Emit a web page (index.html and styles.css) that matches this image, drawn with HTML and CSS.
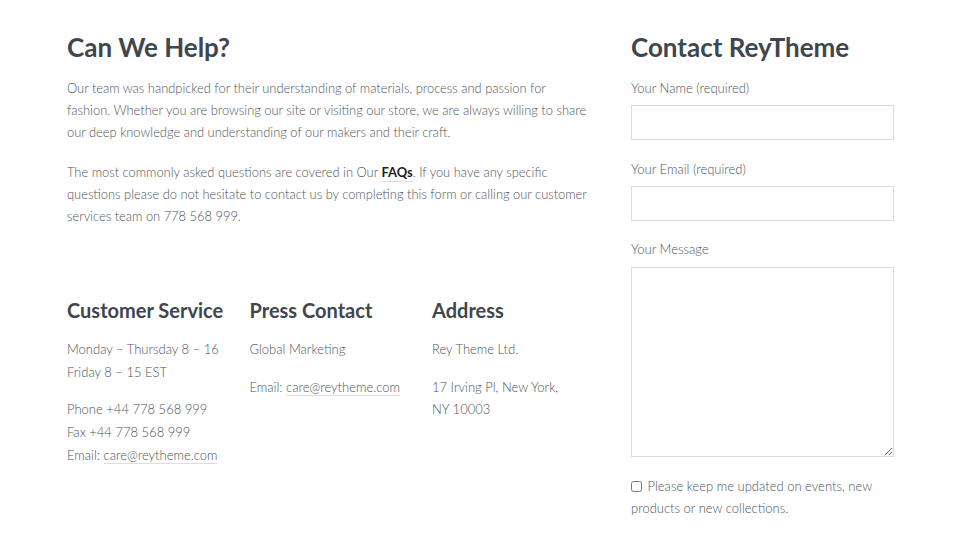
FILE: index.html
```html
<!DOCTYPE html>
<html lang="en">
<head>
<meta charset="utf-8">
<title>Contact</title>
<link rel="stylesheet" href="styles.css">
</head>
<body>
<div class="page">
  <main class="main">
    <h1 class="title">Can We Help?</h1>
    <p class="text">Our team was handpicked for their understanding of materials, process and passion for fashion. Whether you are browsing our site or visiting our store, we are always willing to share our deep knowledge and understanding of our makers and their craft.</p>
    <p class="text">The most commonly asked questions are covered in Our <a class="strong-link" href="#">FAQs</a>. If you have any specific questions please do not hesitate to contact us by completing this form or calling our customer services team on 778 568 999.</p>
    <div class="cols">
      <section class="col">
        <h2 class="sub">Customer Service</h2>
        <p class="small">Monday – Thursday 8 – 16<br>Friday 8 – 15 EST</p>
        <p class="small">Phone +44 778 568 999<br>Fax +44 778 568 999<br>Email: <a class="link" href="#">care@reytheme.com</a></p>
      </section>
      <section class="col">
        <h2 class="sub">Press Contact</h2>
        <p class="small">Global Marketing</p>
        <p class="small">Email: <a class="link" href="#">care@reytheme.com</a></p>
      </section>
      <section class="col">
        <h2 class="sub">Address</h2>
        <p class="small">Rey Theme Ltd.</p>
        <p class="small">17 Irving Pl, New York,<br>NY 10003</p>
      </section>
    </div>
  </main>
  <aside class="side">
    <h1 class="title">Contact ReyTheme</h1>
    <form class="form">
      <label class="label">Your Name (required)</label>
      <input class="field" type="text">
      <label class="label">Your Email (required)</label>
      <input class="field" type="email">
      <label class="label">Your Message</label>
      <textarea class="area"></textarea>
      <label class="check"><input class="box" type="checkbox"> Please keep me updated on events, new products or new collections.</label>
    </form>
  </aside>
</div>
</body>
</html>
```
FILE: styles.css
```css
* { box-sizing: border-box; }
html, body { margin: 0; padding: 0; background: #fff; }
body {
  font-family: Lato, "Open Sans", sans-serif;
  font-weight: 300;
  color: #4e545b;
  font-size: 13px;
}
.page {
  display: flex;
  padding: 31px 0 0 67px;
}
.main { width: 540px; flex-shrink: 0; }
.side { width: 263px; margin-left: 24px; flex-shrink: 0; }
.title {
  margin: 0;
  font-size: 26px;
  font-weight: 700;
  line-height: 32px;
  color: #40464e;
}
.text {
  margin: 14px 0 0;
  line-height: 22px;
  font-size: 12.88px;
  width: 523px;
}
.text + .text { margin-top: 18px; }
.strong-link {
  color: #1a1d21;
  font-weight: 700;
  line-height: 1;
  text-decoration: underline;
  text-decoration-color: #ddd;
  text-decoration-thickness: 1px;
  text-underline-offset: 4px;
}
.cols {
  display: flex;
  margin-top: 70px;
}
.col { width: 182.5px; flex-shrink: 0; }
.sub {
  margin: 0;
  font-size: 20px;
  font-weight: 700;
  line-height: 26px;
  color: #40464e;
}
.small {
  margin: 15px 0 0;
  line-height: 22.7px;
}
.small + .small { margin-top: 15px; }
.link {
  color: inherit;
  text-decoration: none;
  border-bottom: 1px solid #ddd;
}
.form { display: flex; flex-direction: column; }
.label {
  display: block;
  margin-top: 14px;
  line-height: 22px;
}
.field {
  display: block;
  width: 263px;
  height: 35px;
  margin: 6px 0 17.5px;
  border: 1px solid #dcdcdc;
  background: #fff;
}
.area {
  display: block;
  width: 263px;
  height: 190px;
  margin: 7px 0 18px;
  border: 1px solid #dcdcdc;
  background: #fff;
  resize: vertical;
}
.field + .label, .area + .check { margin-top: 0; }
.check {
  display: block;
  line-height: 22px;
}
.box {
  width: 11px;
  height: 11px;
  margin: 0 2px 0 0;
  vertical-align: -1px;
}
```
